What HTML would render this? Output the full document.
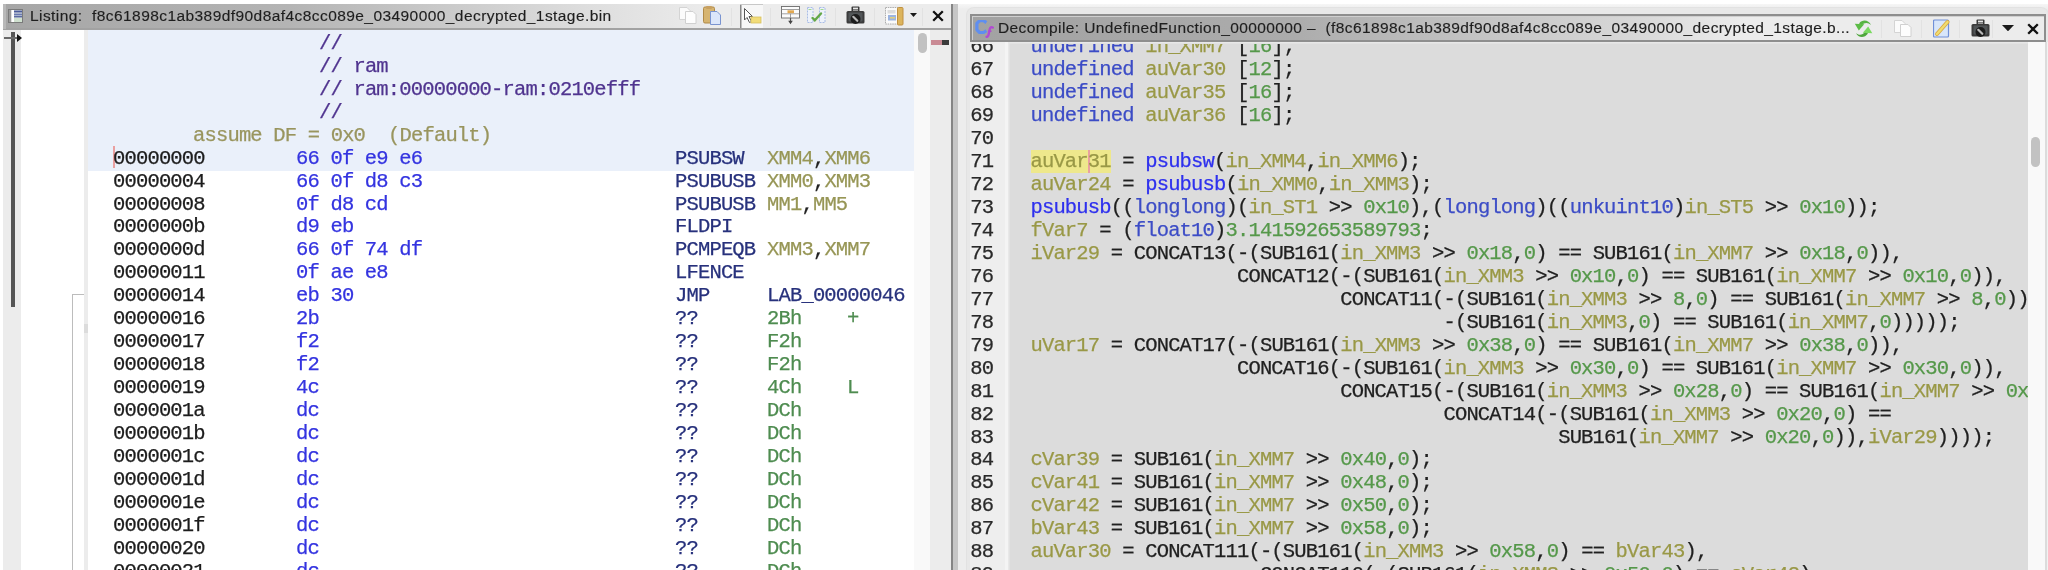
<!DOCTYPE html>
<html><head><meta charset="utf-8">
<style>
html,body{margin:0;padding:0;}
body{--blur:1px;--sy:1;--org:16.93px;-webkit-font-smoothing:antialiased;width:2048px;height:570px;overflow:hidden;position:relative;background:#ffffff;font-family:"Liberation Sans",sans-serif;}
.a{position:absolute;}
.t{position:absolute;white-space:pre;-webkit-text-stroke-width:0.25px;font-family:"Liberation Mono",monospace;font-size:20.5px;letter-spacing:-0.83px;line-height:22.95px;}
.clip{position:absolute;overflow:hidden;}
.gs{will-change:transform;}
.title{position:absolute;white-space:pre;font-family:"Liberation Sans",sans-serif;font-size:15.5px;letter-spacing:0.4px;color:#1e1e1e;-webkit-text-stroke-width:0.15px;line-height:20px;}
</style></head><body>
<div id="wrap" style="position:absolute;left:0;top:0;width:2048px;height:570px;overflow:hidden;">
<!-- ========== LISTING PANE ========== -->
<div class="a" style="left:3px;top:4px;width:948px;height:24px;background:linear-gradient(90deg,#a6a6a6 0%,#b4b4b4 30%,#dedede 62%,#ececec 75%,#ececec 100%);"></div>
<div class="a" style="left:3px;top:28px;width:948px;height:2px;background:#a2a2a2;"></div>
<div class="a" style="left:3px;top:4px;width:3px;height:25px;background:#b9b9b9;"></div>
<div class="title gs" style="left:30px;top:5.5px;letter-spacing:0.43px;">Listing:  f8c61898c1ab389df90d8af4c8cc089e_03490000_decrypted_1stage.bin</div>

<!-- body -->
<div class="clip" style="left:3px;top:30px;width:948px;height:540px;background:#ffffff;">
  <div class="a" style="left:0;top:0;width:17.5px;height:540px;background:#ececec;"></div>
  <div class="a" style="left:81px;top:0;width:4px;height:540px;background:#ececec;"></div>
  <div class="a" style="left:85px;top:0;width:825.5px;height:140.5px;background:#eaf0fa;"></div>
  <div class="a" style="left:910.5px;top:0;width:16.5px;height:540px;background:#f9f9f9;"></div>
  <div class="a" style="left:915px;top:3px;width:9px;height:20px;background:#c2c2c2;border-radius:4.5px;"></div>
  <div class="a" style="left:927px;top:0;width:21px;height:540px;background:#ececec;"></div>
  <div class="a" style="left:927.5px;top:10px;width:11px;height:5px;background:#c98a94;"></div>
  <div class="a" style="left:938.5px;top:10px;width:7.5px;height:5px;background:#3a3a3a;"></div>
  <div class="a" style="left:110.2px;top:116.3px;width:2px;height:22px;background:#eaa0a0;"></div>
  <div class="a" style="left:81px;top:294px;width:4px;height:9px;background:#dcdcdc;"></div>
  <!-- flow arrows -->
  <div class="a" style="left:8px;top:1.5px;width:3.5px;height:275px;background:#555555;"></div>
  <div class="a" style="left:1px;top:6.6px;width:15px;height:2px;background:#6a6a6a;"></div>
  <svg class="a" style="left:13.5px;top:3.6px" width="6" height="8" viewBox="0 0 6 8"><path d="M0 0 L5 4 L0 8 Z" fill="#111"/></svg>
  <div class="a" style="left:69.2px;top:264.5px;width:1.3px;height:280px;background:#bcbcbc;"></div>
  <div class="a" style="left:69.2px;top:264px;width:11.8px;height:1.3px;background:#bcbcbc;"></div>
</div>
<div class="clip gs" style="left:3px;top:30px;width:910.5px;height:540px;">
<div class="a" style="left:-3px;top:-30px;width:2048px;height:600px;">
<div class="t" style="left:319px;top:32.85px;color:#50348f;">//</div>
<div class="t" style="left:319px;top:55.80px;color:#50348f;">// ram</div>
<div class="t" style="left:319px;top:78.75px;color:#50348f;">// ram:00000000-ram:0210efff</div>
<div class="t" style="left:319px;top:101.70px;color:#50348f;">//</div>
<div class="t" style="left:193px;top:124.65px;color:#99955e;">assume DF = 0x0  (Default)</div>
<div class="t" style="left:113px;top:147.60px;color:#1c1c1c;">00000000</div>
<div class="t" style="left:296px;top:147.60px;color:#3434e0;">66 0f e9 e6</div>
<div class="t" style="left:675px;top:147.60px;color:#27317c;">PSUBSW</div>
<div class="t" style="left:767px;top:147.60px"><span style="color:#979656">XMM4</span><span style="color:#202020">,</span><span style="color:#979656">XMM6</span></div>
<div class="t" style="left:113px;top:170.55px;color:#1c1c1c;">00000004</div>
<div class="t" style="left:296px;top:170.55px;color:#3434e0;">66 0f d8 c3</div>
<div class="t" style="left:675px;top:170.55px;color:#27317c;">PSUBUSB</div>
<div class="t" style="left:767px;top:170.55px"><span style="color:#979656">XMM0</span><span style="color:#202020">,</span><span style="color:#979656">XMM3</span></div>
<div class="t" style="left:113px;top:193.50px;color:#1c1c1c;">00000008</div>
<div class="t" style="left:296px;top:193.50px;color:#3434e0;">0f d8 cd</div>
<div class="t" style="left:675px;top:193.50px;color:#27317c;">PSUBUSB</div>
<div class="t" style="left:767px;top:193.50px"><span style="color:#979656">MM1</span><span style="color:#202020">,</span><span style="color:#979656">MM5</span></div>
<div class="t" style="left:113px;top:216.45px;color:#1c1c1c;">0000000b</div>
<div class="t" style="left:296px;top:216.45px;color:#3434e0;">d9 eb</div>
<div class="t" style="left:675px;top:216.45px;color:#27317c;">FLDPI</div>
<div class="t" style="left:113px;top:239.40px;color:#1c1c1c;">0000000d</div>
<div class="t" style="left:296px;top:239.40px;color:#3434e0;">66 0f 74 df</div>
<div class="t" style="left:675px;top:239.40px;color:#27317c;">PCMPEQB</div>
<div class="t" style="left:767px;top:239.40px"><span style="color:#979656">XMM3</span><span style="color:#202020">,</span><span style="color:#979656">XMM7</span></div>
<div class="t" style="left:113px;top:262.35px;color:#1c1c1c;">00000011</div>
<div class="t" style="left:296px;top:262.35px;color:#3434e0;">0f ae e8</div>
<div class="t" style="left:675px;top:262.35px;color:#27317c;">LFENCE</div>
<div class="t" style="left:113px;top:285.30px;color:#1c1c1c;">00000014</div>
<div class="t" style="left:296px;top:285.30px;color:#3434e0;">eb 30</div>
<div class="t" style="left:675px;top:285.30px;color:#27317c;">JMP</div>
<div class="t" style="left:767px;top:285.30px"><span style="color:#27317c">LAB_00000046</span></div>
<div class="t" style="left:113px;top:308.25px;color:#1c1c1c;">00000016</div>
<div class="t" style="left:296px;top:308.25px;color:#3434e0;">2b</div>
<div class="t" style="left:675px;top:308.25px;color:#27317c;">??</div>
<div class="t" style="left:767px;top:308.25px"><span style="color:#4e8c50">2Bh</span></div>
<div class="t" style="left:847px;top:308.25px;color:#4e8c50;">+</div>
<div class="t" style="left:113px;top:331.20px;color:#1c1c1c;">00000017</div>
<div class="t" style="left:296px;top:331.20px;color:#3434e0;">f2</div>
<div class="t" style="left:675px;top:331.20px;color:#27317c;">??</div>
<div class="t" style="left:767px;top:331.20px"><span style="color:#4e8c50">F2h</span></div>
<div class="t" style="left:113px;top:354.15px;color:#1c1c1c;">00000018</div>
<div class="t" style="left:296px;top:354.15px;color:#3434e0;">f2</div>
<div class="t" style="left:675px;top:354.15px;color:#27317c;">??</div>
<div class="t" style="left:767px;top:354.15px"><span style="color:#4e8c50">F2h</span></div>
<div class="t" style="left:113px;top:377.10px;color:#1c1c1c;">00000019</div>
<div class="t" style="left:296px;top:377.10px;color:#3434e0;">4c</div>
<div class="t" style="left:675px;top:377.10px;color:#27317c;">??</div>
<div class="t" style="left:767px;top:377.10px"><span style="color:#4e8c50">4Ch</span></div>
<div class="t" style="left:847px;top:377.10px;color:#4e8c50;">L</div>
<div class="t" style="left:113px;top:400.05px;color:#1c1c1c;">0000001a</div>
<div class="t" style="left:296px;top:400.05px;color:#3434e0;">dc</div>
<div class="t" style="left:675px;top:400.05px;color:#27317c;">??</div>
<div class="t" style="left:767px;top:400.05px"><span style="color:#4e8c50">DCh</span></div>
<div class="t" style="left:113px;top:423.00px;color:#1c1c1c;">0000001b</div>
<div class="t" style="left:296px;top:423.00px;color:#3434e0;">dc</div>
<div class="t" style="left:675px;top:423.00px;color:#27317c;">??</div>
<div class="t" style="left:767px;top:423.00px"><span style="color:#4e8c50">DCh</span></div>
<div class="t" style="left:113px;top:445.95px;color:#1c1c1c;">0000001c</div>
<div class="t" style="left:296px;top:445.95px;color:#3434e0;">dc</div>
<div class="t" style="left:675px;top:445.95px;color:#27317c;">??</div>
<div class="t" style="left:767px;top:445.95px"><span style="color:#4e8c50">DCh</span></div>
<div class="t" style="left:113px;top:468.90px;color:#1c1c1c;">0000001d</div>
<div class="t" style="left:296px;top:468.90px;color:#3434e0;">dc</div>
<div class="t" style="left:675px;top:468.90px;color:#27317c;">??</div>
<div class="t" style="left:767px;top:468.90px"><span style="color:#4e8c50">DCh</span></div>
<div class="t" style="left:113px;top:491.85px;color:#1c1c1c;">0000001e</div>
<div class="t" style="left:296px;top:491.85px;color:#3434e0;">dc</div>
<div class="t" style="left:675px;top:491.85px;color:#27317c;">??</div>
<div class="t" style="left:767px;top:491.85px"><span style="color:#4e8c50">DCh</span></div>
<div class="t" style="left:113px;top:514.80px;color:#1c1c1c;">0000001f</div>
<div class="t" style="left:296px;top:514.80px;color:#3434e0;">dc</div>
<div class="t" style="left:675px;top:514.80px;color:#27317c;">??</div>
<div class="t" style="left:767px;top:514.80px"><span style="color:#4e8c50">DCh</span></div>
<div class="t" style="left:113px;top:537.75px;color:#1c1c1c;">00000020</div>
<div class="t" style="left:296px;top:537.75px;color:#3434e0;">dc</div>
<div class="t" style="left:675px;top:537.75px;color:#27317c;">??</div>
<div class="t" style="left:767px;top:537.75px"><span style="color:#4e8c50">DCh</span></div>
<div class="t" style="left:113px;top:560.70px;color:#1c1c1c;">00000021</div>
<div class="t" style="left:296px;top:560.70px;color:#3434e0;">dc</div>
<div class="t" style="left:675px;top:560.70px;color:#27317c;">??</div>
<div class="t" style="left:767px;top:560.70px"><span style="color:#4e8c50">DCh</span></div>

</div></div>
<!-- divider -->
<div class="a" style="left:951px;top:4px;width:2px;height:566px;background:#858585;"></div>
<div class="a" style="left:953px;top:4px;width:4.5px;height:566px;background:#c6c6c6;"></div>

<!-- ========== DECOMPILE PANE ========== -->
<div class="a" style="left:957.5px;top:4px;width:1090.5px;height:566px;background:linear-gradient(180deg,#f6f6f6 0px,#ededed 5px,#ededed 100%);"></div>
<div class="a" style="left:966.5px;top:7.5px;width:1081.5px;height:580px;border-radius:7px;background:#e8e8e8;box-shadow:0 0 0 1px #e2e2e2;"></div>
<div class="a" style="left:2045px;top:42px;width:1.5px;height:528px;background:#dcdcdc;"></div>
<div class="a" style="left:2046.5px;top:42px;width:1.5px;height:528px;background:#f2f2f2;"></div>
<div class="a" style="left:970px;top:14px;width:1076px;height:28px;box-sizing:border-box;border:2px solid #8e8e8e;box-shadow:inset 1px 1px 0 #cfcfcf;background:linear-gradient(90deg,#a2a2a2 0%,#acacac 30%,#d8d8d8 62%,#ececec 72%,#ececec 100%);"></div>
<div class="title gs" style="left:998px;top:17.5px;">Decompile: UndefinedFunction_00000000 –  (f8c61898c1ab389df90d8af4c8cc089e_03490000_decrypted_1stage.b...</div>
<div class="clip" style="left:970px;top:42px;width:1076px;height:528px;">
  <div class="a" style="left:0;top:0;width:35px;height:528px;background:#eeeeee;"></div>
  <div class="a" style="left:35px;top:0;width:2.5px;height:528px;background:#f4f4f4;"></div>
  <div class="a" style="left:37.5px;top:0;width:1020px;height:528px;background:#dcdcdc;box-shadow:inset 1.5px 1.5px 0 #e8e8e8;"></div>
  <div class="a" style="left:1057.5px;top:0;width:17.5px;height:528px;background:#f9f9f9;"></div>
  <div class="a" style="left:1061px;top:95px;width:9px;height:30px;background:#c2c2c2;border-radius:4.5px;"></div>
  <div class="a" style="left:60.5px;top:108px;width:80.5px;height:23px;background:#eee88c;"></div>
  <div class="a" style="left:118px;top:108px;width:2px;height:23px;background:#e8a0a0;"></div>
</div>
<div class="clip gs" style="left:970px;top:44px;width:1057.5px;height:526px;">
<div class="a" style="left:-970px;top:-44px;width:2048px;height:620px;">
<div class="t" style="left:970.2px;top:36.35px;color:#2a2a2a;">66</div>
<div class="t" style="left:970.2px;top:59.30px;color:#2a2a2a;">67</div>
<div class="t" style="left:970.2px;top:82.25px;color:#2a2a2a;">68</div>
<div class="t" style="left:970.2px;top:105.20px;color:#2a2a2a;">69</div>
<div class="t" style="left:970.2px;top:128.15px;color:#2a2a2a;">70</div>
<div class="t" style="left:970.2px;top:151.10px;color:#2a2a2a;">71</div>
<div class="t" style="left:970.2px;top:174.05px;color:#2a2a2a;">72</div>
<div class="t" style="left:970.2px;top:197.00px;color:#2a2a2a;">73</div>
<div class="t" style="left:970.2px;top:219.95px;color:#2a2a2a;">74</div>
<div class="t" style="left:970.2px;top:242.90px;color:#2a2a2a;">75</div>
<div class="t" style="left:970.2px;top:265.85px;color:#2a2a2a;">76</div>
<div class="t" style="left:970.2px;top:288.80px;color:#2a2a2a;">77</div>
<div class="t" style="left:970.2px;top:311.75px;color:#2a2a2a;">78</div>
<div class="t" style="left:970.2px;top:334.70px;color:#2a2a2a;">79</div>
<div class="t" style="left:970.2px;top:357.65px;color:#2a2a2a;">80</div>
<div class="t" style="left:970.2px;top:380.60px;color:#2a2a2a;">81</div>
<div class="t" style="left:970.2px;top:403.55px;color:#2a2a2a;">82</div>
<div class="t" style="left:970.2px;top:426.50px;color:#2a2a2a;">83</div>
<div class="t" style="left:970.2px;top:449.45px;color:#2a2a2a;">84</div>
<div class="t" style="left:970.2px;top:472.40px;color:#2a2a2a;">85</div>
<div class="t" style="left:970.2px;top:495.35px;color:#2a2a2a;">86</div>
<div class="t" style="left:970.2px;top:518.30px;color:#2a2a2a;">87</div>
<div class="t" style="left:970.2px;top:541.25px;color:#2a2a2a;">88</div>
<div class="t" style="left:970.2px;top:564.20px;color:#2a2a2a;">89</div>

<div class="t" style="left:1007.5px;top:36.35px;color:#202020">  <span style="color:#3c4cc6">undefined</span> <span style="color:#999846">in_XMM7</span> [<span style="color:#55984a">16</span>];</div>
<div class="t" style="left:1007.5px;top:59.30px;color:#202020">  <span style="color:#3c4cc6">undefined</span> <span style="color:#999846">auVar30</span> [<span style="color:#55984a">12</span>];</div>
<div class="t" style="left:1007.5px;top:82.25px;color:#202020">  <span style="color:#3c4cc6">undefined</span> <span style="color:#999846">auVar35</span> [<span style="color:#55984a">16</span>];</div>
<div class="t" style="left:1007.5px;top:105.20px;color:#202020">  <span style="color:#3c4cc6">undefined</span> <span style="color:#999846">auVar36</span> [<span style="color:#55984a">16</span>];</div>
<div class="t" style="left:1007.5px;top:151.10px;color:#202020">  <span style="color:#999846">auVar31</span> = <span style="color:#2e30ee">psubsw</span>(<span style="color:#999846">in_XMM4</span>,<span style="color:#999846">in_XMM6</span>);</div>
<div class="t" style="left:1007.5px;top:174.05px;color:#202020">  <span style="color:#999846">auVar24</span> = <span style="color:#2e30ee">psubusb</span>(<span style="color:#999846">in_XMM0</span>,<span style="color:#999846">in_XMM3</span>);</div>
<div class="t" style="left:1007.5px;top:197.00px;color:#202020">  <span style="color:#2e30ee">psubusb</span>((<span style="color:#3c4cc6">longlong</span>)(<span style="color:#999846">in_ST1</span> &gt;&gt; <span style="color:#55984a">0x10</span>),(<span style="color:#3c4cc6">longlong</span>)((<span style="color:#3c4cc6">unkuint10</span>)<span style="color:#999846">in_ST5</span> &gt;&gt; <span style="color:#55984a">0x10</span>));</div>
<div class="t" style="left:1007.5px;top:219.95px;color:#202020">  <span style="color:#999846">fVar7</span> = (<span style="color:#3c4cc6">float10</span>)<span style="color:#55984a">3.141592653589793</span>;</div>
<div class="t" style="left:1007.5px;top:242.90px;color:#202020">  <span style="color:#999846">iVar29</span> = CONCAT13(-(SUB161(<span style="color:#999846">in_XMM3</span> &gt;&gt; <span style="color:#55984a">0x18</span>,<span style="color:#55984a">0</span>) == SUB161(<span style="color:#999846">in_XMM7</span> &gt;&gt; <span style="color:#55984a">0x18</span>,<span style="color:#55984a">0</span>)),</div>
<div class="t" style="left:1007.5px;top:265.85px;color:#202020">                    CONCAT12(-(SUB161(<span style="color:#999846">in_XMM3</span> &gt;&gt; <span style="color:#55984a">0x10</span>,<span style="color:#55984a">0</span>) == SUB161(<span style="color:#999846">in_XMM7</span> &gt;&gt; <span style="color:#55984a">0x10</span>,<span style="color:#55984a">0</span>)),</div>
<div class="t" style="left:1007.5px;top:288.80px;color:#202020">                             CONCAT11(-(SUB161(<span style="color:#999846">in_XMM3</span> &gt;&gt; <span style="color:#55984a">8</span>,<span style="color:#55984a">0</span>) == SUB161(<span style="color:#999846">in_XMM7</span> &gt;&gt; <span style="color:#55984a">8</span>,<span style="color:#55984a">0</span>)),</div>
<div class="t" style="left:1007.5px;top:311.75px;color:#202020">                                      -(SUB161(<span style="color:#999846">in_XMM3</span>,<span style="color:#55984a">0</span>) == SUB161(<span style="color:#999846">in_XMM7</span>,<span style="color:#55984a">0</span>)))));</div>
<div class="t" style="left:1007.5px;top:334.70px;color:#202020">  <span style="color:#999846">uVar17</span> = CONCAT17(-(SUB161(<span style="color:#999846">in_XMM3</span> &gt;&gt; <span style="color:#55984a">0x38</span>,<span style="color:#55984a">0</span>) == SUB161(<span style="color:#999846">in_XMM7</span> &gt;&gt; <span style="color:#55984a">0x38</span>,<span style="color:#55984a">0</span>)),</div>
<div class="t" style="left:1007.5px;top:357.65px;color:#202020">                    CONCAT16(-(SUB161(<span style="color:#999846">in_XMM3</span> &gt;&gt; <span style="color:#55984a">0x30</span>,<span style="color:#55984a">0</span>) == SUB161(<span style="color:#999846">in_XMM7</span> &gt;&gt; <span style="color:#55984a">0x30</span>,<span style="color:#55984a">0</span>)),</div>
<div class="t" style="left:1007.5px;top:380.60px;color:#202020">                             CONCAT15(-(SUB161(<span style="color:#999846">in_XMM3</span> &gt;&gt; <span style="color:#55984a">0x28</span>,<span style="color:#55984a">0</span>) == SUB161(<span style="color:#999846">in_XMM7</span> &gt;&gt; <span style="color:#55984a">0x28</span>,<span style="color:#55984a">0</span>)),</div>
<div class="t" style="left:1007.5px;top:403.55px;color:#202020">                                      CONCAT14(-(SUB161(<span style="color:#999846">in_XMM3</span> &gt;&gt; <span style="color:#55984a">0x20</span>,<span style="color:#55984a">0</span>) ==</div>
<div class="t" style="left:1007.5px;top:426.50px;color:#202020">                                                SUB161(<span style="color:#999846">in_XMM7</span> &gt;&gt; <span style="color:#55984a">0x20</span>,<span style="color:#55984a">0</span>)),<span style="color:#999846">iVar29</span>))));</div>
<div class="t" style="left:1007.5px;top:449.45px;color:#202020">  <span style="color:#999846">cVar39</span> = SUB161(<span style="color:#999846">in_XMM7</span> &gt;&gt; <span style="color:#55984a">0x40</span>,<span style="color:#55984a">0</span>);</div>
<div class="t" style="left:1007.5px;top:472.40px;color:#202020">  <span style="color:#999846">cVar41</span> = SUB161(<span style="color:#999846">in_XMM7</span> &gt;&gt; <span style="color:#55984a">0x48</span>,<span style="color:#55984a">0</span>);</div>
<div class="t" style="left:1007.5px;top:495.35px;color:#202020">  <span style="color:#999846">cVar42</span> = SUB161(<span style="color:#999846">in_XMM7</span> &gt;&gt; <span style="color:#55984a">0x50</span>,<span style="color:#55984a">0</span>);</div>
<div class="t" style="left:1007.5px;top:518.30px;color:#202020">  <span style="color:#999846">bVar43</span> = SUB161(<span style="color:#999846">in_XMM7</span> &gt;&gt; <span style="color:#55984a">0x58</span>,<span style="color:#55984a">0</span>);</div>
<div class="t" style="left:1007.5px;top:541.25px;color:#202020">  <span style="color:#999846">auVar30</span> = CONCAT111(-(SUB161(<span style="color:#999846">in_XMM3</span> &gt;&gt; <span style="color:#55984a">0x58</span>,<span style="color:#55984a">0</span>) == <span style="color:#999846">bVar43</span>),</div>
<div class="t" style="left:1007.5px;top:564.20px;color:#202020">                      CONCAT110(-(SUB161(<span style="color:#999846">in_XMM3</span> &gt;&gt; <span style="color:#55984a">0x50</span>,<span style="color:#55984a">0</span>) == <span style="color:#999846">cVar42</span>),</div>

</div></div>
<svg class="a" style="left:8px;top:9px" width="15" height="14" viewBox="0 0 15 14"><rect x="0.5" y="0.5" width="14" height="13" fill="#e8ece8" stroke="#7a7a7a" stroke-width="1"/><rect x="1" y="1" width="2.5" height="12" fill="#9a9a9a"/><rect x="3.5" y="1" width="2.5" height="12" fill="#ffffff"/><rect x="6" y="1.5" width="8" height="2" fill="#4a5a9a"/><rect x="6" y="4.5" width="8" height="2" fill="#6a7ab0"/><rect x="6" y="7" width="8" height="1.5" fill="#5a6aa0"/><rect x="6" y="9" width="8" height="4" fill="#cfe0cf"/></svg>
<svg class="a" style="left:677.5px;top:6px" width="19" height="19" viewBox="0 0 19 19"><path d="M1.5 1.5 H9 L12 4.5 V13.5 H1.5 Z" fill="#fbfbfb" stroke="#d4d4d4" stroke-width="1"/><path d="M7.5 5.5 H15 L18 8.5 V17.5 H7.5 Z" fill="#fdfdfd" stroke="#d0d0d0" stroke-width="1"/></svg>
<svg class="a" style="left:703px;top:6px" width="18" height="19" viewBox="0 0 18 19"><rect x="0.5" y="1" width="11" height="16" rx="1.5" fill="#d6b470" stroke="#b08a48" stroke-width="1"/><rect x="3" y="0" width="6" height="3" rx="1" fill="#c8a060"/><path d="M7.5 5.5 H14 L17.5 9 V18.5 H7.5 Z" fill="#dbe6fa" stroke="#7a94d0" stroke-width="1"/></svg>
<div class="a" style="left:730.5px;top:8px;width:1px;height:18px;background:#e2e2e2;"></div>
<svg class="a" style="left:739.5px;top:4px" width="23" height="24" viewBox="0 0 23 24"><rect x="0" y="0" width="23" height="24" fill="#f7f7f7"/><rect x="0" y="0" width="1.5" height="24" fill="#8a8a8a"/><rect x="0" y="0" width="23" height="1" fill="#c8c8c8"/><path d="M4.5 4.5 L4.5 16 L7 13.5 L9.5 18.5 L11.5 17.5 L9 12.5 L12.5 12.5 Z" fill="#ffffff" stroke="#555" stroke-width="1"/><rect x="11" y="13" width="10" height="6" fill="#f2dc78" stroke="#d8c060" stroke-width="0.8"/></svg>
<div class="a" style="left:770px;top:8px;width:1px;height:18px;background:#e2e2e2;"></div>
<svg class="a" style="left:781px;top:6px" width="19" height="19" viewBox="0 0 19 19"><rect x="0.5" y="0.5" width="18" height="11.5" fill="#fbfbfb" stroke="#6a6a6a" stroke-width="0.9"/><line x1="0.5" y1="3.5" x2="18.5" y2="3.5" stroke="#8a8a8a" stroke-width="0.8"/><line x1="0.5" y1="7.8" x2="18.5" y2="7.8" stroke="#8a8a8a" stroke-width="0.8"/><line x1="9.5" y1="7.8" x2="9.5" y2="12" stroke="#8a8a8a" stroke-width="0.8"/><rect x="6.5" y="4.3" width="6.5" height="2.8" fill="#e2a850"/><line x1="9.5" y1="12" x2="9.5" y2="16" stroke="#555" stroke-width="1.2"/><path d="M7.2 14.8 L11.8 14.8 L9.5 18.2 Z" fill="#444"/></svg>
<svg class="a" style="left:806.5px;top:7px" width="19" height="17" viewBox="0 0 19 17"><rect x="0.5" y="0.5" width="5.5" height="15" fill="#eef2fa" stroke="#a8bce6" stroke-width="1" stroke-dasharray="2 1"/><rect x="12.5" y="0.5" width="5.5" height="15" fill="#eef2fa" stroke="#a8bce6" stroke-width="1" stroke-dasharray="2 1"/><rect x="1.5" y="2" width="3" height="1" fill="#a0d890"/><rect x="13.5" y="2" width="3" height="1" fill="#a0d890"/><path d="M5.5 11 L7.8 13.2 L14 6.5" fill="none" stroke="#64a848" stroke-width="2.4" stroke-linecap="round"/></svg>
<div class="a" style="left:834.5px;top:8px;width:1px;height:18px;background:#e2e2e2;"></div>
<svg class="a" style="left:845.5px;top:6px" width="19" height="19" viewBox="0 0 19 19"><rect x="5.5" y="0.5" width="8" height="6" rx="1" fill="#3a3a3a"/><rect x="7" y="1.6" width="5" height="1.8" fill="#e6e6e6"/><rect x="7" y="4" width="5" height="1.2" fill="#9a9a9a"/><rect x="0.5" y="5" width="18" height="12.5" rx="1.5" fill="#3c3c3c"/><rect x="2.5" y="6.5" width="14" height="9" rx="1" fill="#525658"/><circle cx="9.5" cy="13" r="5" fill="#1c1c1c"/><path d="M7.3 10.8 L11.3 14.8" stroke="#b8b8b8" stroke-width="2.2" stroke-linecap="round"/></svg>
<div class="a" style="left:874px;top:8px;width:1px;height:18px;background:#e2e2e2;"></div>
<svg class="a" style="left:885px;top:6.5px" width="19" height="19" viewBox="0 0 19 19"><rect x="0.5" y="0.5" width="12" height="16.5" fill="#fafafa" stroke="#9a9a9a" stroke-width="0.8" stroke-dasharray="1.5 0.8"/><rect x="2.5" y="3" width="8" height="3.5" fill="#dcdcdc"/><rect x="3" y="8" width="8" height="5.5" fill="#9cb4e0"/><rect x="5" y="10" width="5" height="1.5" fill="#e0d080"/><rect x="12.5" y="0.5" width="5.5" height="17.5" rx="1" fill="#dcb45c" stroke="#c09040" stroke-width="1"/></svg>
<svg class="a" style="left:910px;top:12.5px" width="7" height="4" viewBox="0 0 7 4"><path d="M0 0 H7 L3.5 4 Z" fill="#1a1a1a"/></svg>
<div class="a" style="left:922px;top:8px;width:1px;height:18px;background:#e2e2e2;"></div>
<svg class="a" style="left:931.5px;top:9.5px" width="12" height="12" viewBox="0 0 12 12"><path d="M1.2 1.2 L10.8 10.8 M10.8 1.2 L1.2 10.8" stroke="#111" stroke-width="2.3" stroke-linecap="butt"/></svg>
<svg class="a" style="left:974.5px;top:19.5px" width="19" height="19" viewBox="0 0 19 19"><path d="M11.4 2.6 L8.6 0.7 H4.6 L1.9 3.4 V9.8 L4.6 12.5 H8.6 L11.4 10.6" fill="none" stroke="#5f8ef0" stroke-width="3.2" stroke-linejoin="round"/><path d="M17.8 7.6 C16.5 6.6 15.2 7.4 14.8 9 L13.6 14.5 C13.3 16 12.6 17.2 11.6 16.8" fill="none" stroke="#b24ad2" stroke-width="2.4" stroke-linecap="round"/><path d="M13 11.2 H16.5" stroke="#b24ad2" stroke-width="1.5"/></svg>
<svg class="a" style="left:1853.5px;top:18.5px" width="19" height="20" viewBox="0 0 19 20"><path d="M17 6 C15 1.5 9 -0.5 5 4.5 L7.8 6.2 C10.5 3 14.5 3.5 17 6 Z" fill="#58b444"/><path d="M0.8 4.8 L10.2 5.2 L4.8 11.5 Z" fill="#5cbc46"/><path d="M2 14 C4 18.5 10 20 14 14.5 L11.2 12.8 C8.5 16.5 4.5 16.5 2 14 Z" fill="#4ea63c"/><path d="M18.3 14.2 L8.8 13.8 L14.2 7.5 Z" fill="#7ada60"/></svg>
<div class="a" style="left:1881px;top:20px;width:1px;height:18px;background:#e2e2e2;"></div>
<svg class="a" style="left:1892.5px;top:19px" width="19" height="19" viewBox="0 0 19 19"><path d="M1.5 1.5 H9 L12 4.5 V13.5 H1.5 Z" fill="#fbfbfb" stroke="#d4d4d4" stroke-width="1"/><path d="M7.5 5.5 H15 L18 8.5 V17.5 H7.5 Z" fill="#fdfdfd" stroke="#d0d0d0" stroke-width="1"/></svg>
<div class="a" style="left:1920.5px;top:20px;width:1px;height:18px;background:#e2e2e2;"></div>
<svg class="a" style="left:1933px;top:19px" width="18" height="19" viewBox="0 0 18 19"><rect x="0.5" y="1" width="15" height="17" rx="1" fill="#d8e6fa" stroke="#7090d8" stroke-width="1.2"/><path d="M4 15 L14.5 3" stroke="#d8a840" stroke-width="4" stroke-linecap="round"/><path d="M4 15 L14.5 3" stroke="#f0dc70" stroke-width="2.4" stroke-linecap="round"/></svg>
<div class="a" style="left:1959px;top:20px;width:1px;height:18px;background:#e2e2e2;"></div>
<svg class="a" style="left:1970.5px;top:19px" width="19" height="19" viewBox="0 0 19 19"><rect x="5.5" y="0.5" width="8" height="6" rx="1" fill="#3a3a3a"/><rect x="7" y="1.6" width="5" height="1.8" fill="#e6e6e6"/><rect x="7" y="4" width="5" height="1.2" fill="#9a9a9a"/><rect x="0.5" y="5" width="18" height="12.5" rx="1.5" fill="#3c3c3c"/><rect x="2.5" y="6.5" width="14" height="9" rx="1" fill="#525658"/><circle cx="9.5" cy="13" r="5" fill="#1c1c1c"/><path d="M7.3 10.8 L11.3 14.8" stroke="#b8b8b8" stroke-width="2.2" stroke-linecap="round"/></svg>
<div class="a" style="left:1991.5px;top:20px;width:1px;height:18px;background:#e2e2e2;"></div>
<svg class="a" style="left:2001.5px;top:25.2px" width="12" height="6.3" viewBox="0 0 12 6.3"><path d="M0 0 H12 L6.0 6.3 Z" fill="#1a1a1a"/></svg>
<svg class="a" style="left:2026.5px;top:22.5px" width="12" height="12" viewBox="0 0 12 12"><path d="M1.2 1.2 L10.8 10.8 M10.8 1.2 L1.2 10.8" stroke="#111" stroke-width="2.3" stroke-linecap="butt"/></svg>

</div>
</body></html>
